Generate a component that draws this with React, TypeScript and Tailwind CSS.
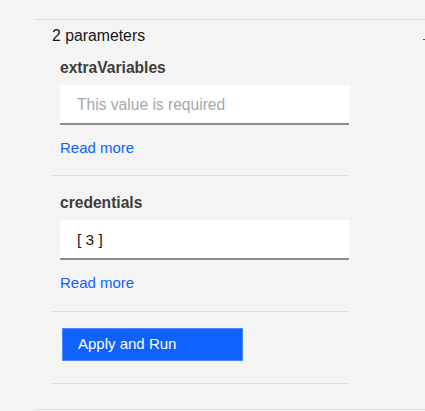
import React from "react"

const font = { fontFamily: "'Liberation Sans', Arial, sans-serif" }

type Param = { name: string; value?: string; placeholder?: string }

const params: Param[] = [
  { name: "extraVariables", placeholder: "This value is required" },
  { name: "credentials", value: "[ 3 ]" },
]

function ParamField({ p }: { p: Param }) {
  return (
    <div className="pl-[8px]">
      <div className="text-[15.6px] leading-[20px] font-bold text-[#3d3d3d]">{p.name}</div>
      <div className="mt-[7px] flex h-[40px] items-center border-b-2 border-[#8d8d8d] bg-white pl-[17px] pt-[1px]">
        {p.value ? (
          <span className="text-[15.5px] text-[#161616]">{p.value}</span>
        ) : (
          <span className="text-[15.6px] text-[#a8a8a8]">{p.placeholder}</span>
        )}
      </div>
      <div className="mt-[13px] text-[15px] leading-[20px] text-[#0f62fe]">Read more</div>
    </div>
  )
}

export default function App() {
  return (
    <div className="h-[411px] w-[425px] overflow-hidden bg-[#f4f4f4] pt-[19px]" style={font}>
      <div className="ml-[35px] border-y border-[#dcdcdc] pb-[25px]">
        <div className="flex justify-between pl-[17px] pt-[6px]">
          <div className="text-[15.8px] leading-[20px] text-[#161616]">2 parameters</div>
          <div className="mt-[13px] h-[1px] w-[2px] bg-[#525252]" />
        </div>
        <div className="ml-[17px] w-[297px]">
          <div className="mt-[12px]">
            <ParamField p={params[0]} />
          </div>
          <div className="mt-[17px] border-t border-[#e0e0e0] pt-[17px]">
            <ParamField p={params[1]} />
          </div>
          <div className="mt-[18px] border-t border-[#e0e0e0] pt-[16px]">
            <button className="ml-[10px] flex h-[33px] w-[181px] items-center border border-[#4589ff] bg-[#0f62fe] pl-[15px] text-[15px] text-white">
              Apply and Run
            </button>
          </div>
          <div className="mt-[22px] border-t border-[#e0e0e0]" />
        </div>
      </div>
    </div>
  )
}
